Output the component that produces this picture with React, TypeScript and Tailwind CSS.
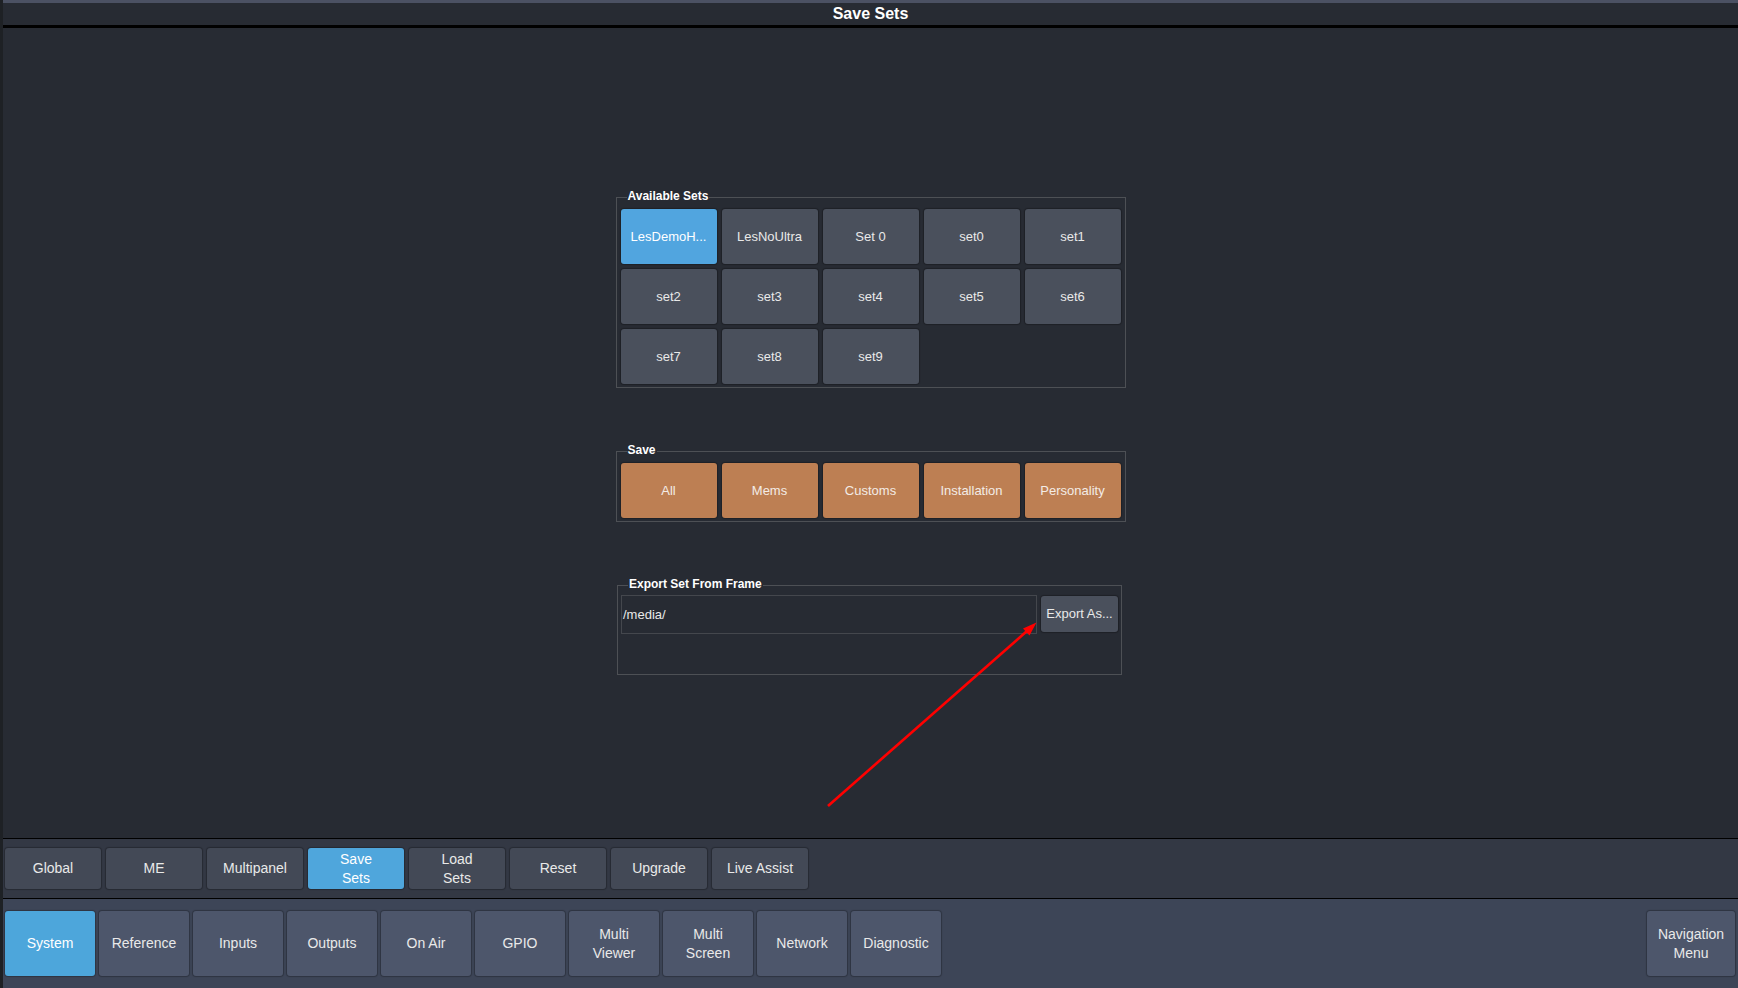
import React from 'react';

const sets = ['LesDemoH...', 'LesNoUltra', 'Set 0', 'set0', 'set1', 'set2', 'set3', 'set4', 'set5', 'set6', 'set7', 'set8', 'set9'];
const saveOptions = ['All', 'Mems', 'Customs', 'Installation', 'Personality'];
const subTabs = ['Global', 'ME', 'Multipanel', 'Save\nSets', 'Load\nSets', 'Reset', 'Upgrade', 'Live Assist'];
const mainTabs = ['System', 'Reference', 'Inputs', 'Outputs', 'On Air', 'GPIO', 'Multi\nViewer', 'Multi\nScreen', 'Network', 'Diagnostic'];

function Group({ label, className, children }: { label: string; className: string; children: React.ReactNode }) {
  return (
    <div className={`relative border border-[#4d5055] ${className}`}>
      <span className="absolute left-[10px] top-[-9px] px-[1px] bg-[#272b33] text-[12px] leading-[14px] font-bold text-white">
        {label}
      </span>
      {children}
    </div>
  );
}

function Label({ text }: { text: string }) {
  return (
    <span className="text-center leading-[19px]">
      {text.split('\n').map((line) => (
        <span key={line} className="block">
          {line}
        </span>
      ))}
    </span>
  );
}

export default function App() {
  return (
    <div className="relative w-[1738px] h-[988px] flex overflow-hidden bg-[#272b33] font-['Liberation_Sans',Arial,sans-serif] text-[#e9e9e9]">
      <div className="w-[3px] shrink-0 bg-[#1e2125]" />
      <div className="flex-1 flex flex-col">
        {/* title */}
        <div className="h-[3px] bg-[#4b5163]" />
        <div className="h-[22px] flex items-center justify-center text-[16px] font-bold text-white">Save Sets</div>
        <div className="h-[3px] bg-black" />

        {/* content */}
        <div className="flex-1 flex flex-col items-center pt-[169px]">
          <Group label="Available Sets" className="w-[510px] pt-[11px] pb-[3px] px-[4px]">
            <div className="grid grid-cols-[repeat(5,96px)] auto-rows-[55px] gap-[5px]">
              {sets.map((s, i) => (
                <button
                  key={s}
                  className={`rounded-[3px] text-[13px] shadow-[0_0_1px_1px_rgba(0,0,0,0.25)] ${
                    i === 0 ? 'bg-[#51a5df] text-white' : 'bg-[#4a505c]'
                  }`}
                >
                  {s}
                </button>
              ))}
            </div>
          </Group>

          <Group label="Save" className="mt-[63px] w-[510px] pt-[11px] pb-[3px] px-[4px]">
            <div className="flex gap-[5px]">
              {saveOptions.map((s) => (
                <button
                  key={s}
                  className="w-[96px] h-[55px] rounded-[3px] bg-[#bd7f53] text-[13px] text-[#f3ece6] shadow-[0_0_1px_1px_rgba(0,0,0,0.25)]"
                >
                  {s}
                </button>
              ))}
            </div>
          </Group>

          <Group label="Export Set From Frame" className="mt-[63px] ml-[-2px] w-[505px] h-[90px] pt-[9px] px-[3px]">
            <div className="flex items-start gap-[4px]">
              <div className="w-[416px] h-[39px] border border-[#44474d] flex items-center pl-[1px] text-[13px]">/media/</div>
              <button className="mt-[1px] w-[77px] h-[36px] rounded-[3px] bg-[#4a505c] text-[13px] shadow-[0_0_1px_1px_rgba(0,0,0,0.25)]">
                Export As...
              </button>
            </div>
          </Group>
        </div>

        {/* sub navigation */}
        <div className="h-px bg-black" />
        <div className="h-[59px] shrink-0 bg-[#333844] flex gap-[5px] pl-[2px] pt-[9px]">
          {subTabs.map((t, i) => (
            <button
              key={t}
              className={`w-[96px] h-[41px] rounded-[3px] text-[14px] flex items-center justify-center shadow-[0_0_1px_1px_rgba(0,0,0,0.25)] ${
                i === 3 ? 'bg-[#4fa6dc] text-white' : 'bg-[#434956]'
              }`}
            >
              <Label text={t} />
            </button>
          ))}
        </div>
        <div className="h-px bg-black" />

        {/* main navigation */}
        <div className="h-[89px] shrink-0 bg-[#3d4557] flex pl-[2px] pr-[3px] pt-[12px]">
          <div className="flex gap-[4px]">
            {mainTabs.map((t, i) => (
              <button
                key={t}
                className={`w-[90px] h-[65px] rounded-[3px] text-[14px] flex items-center justify-center shadow-[0_0_1px_1px_rgba(0,0,0,0.25)] ${
                  i === 0 ? 'bg-[#4da6db] text-white' : 'bg-[#4d566b]'
                }`}
              >
                <Label text={t} />
              </button>
            ))}
          </div>
          <button className="ml-auto w-[88px] h-[65px] rounded-[3px] bg-[#4d566b] text-[14px] flex items-center justify-center shadow-[0_0_1px_1px_rgba(0,0,0,0.25)]">
            <Label text={'Navigation\nMenu'} />
          </button>
        </div>
      </div>

      {/* annotation arrow */}
      <svg className="absolute inset-0 pointer-events-none" width="1738" height="988" viewBox="0 0 1738 988">
        <line x1="828" y1="806" x2="1027" y2="631" stroke="#ff0000" strokeWidth="2.6" />
        <polygon points="1036.5,622.5 1023,628.4 1029.5,635.4" fill="#ff0000" />
      </svg>
    </div>
  );
}
